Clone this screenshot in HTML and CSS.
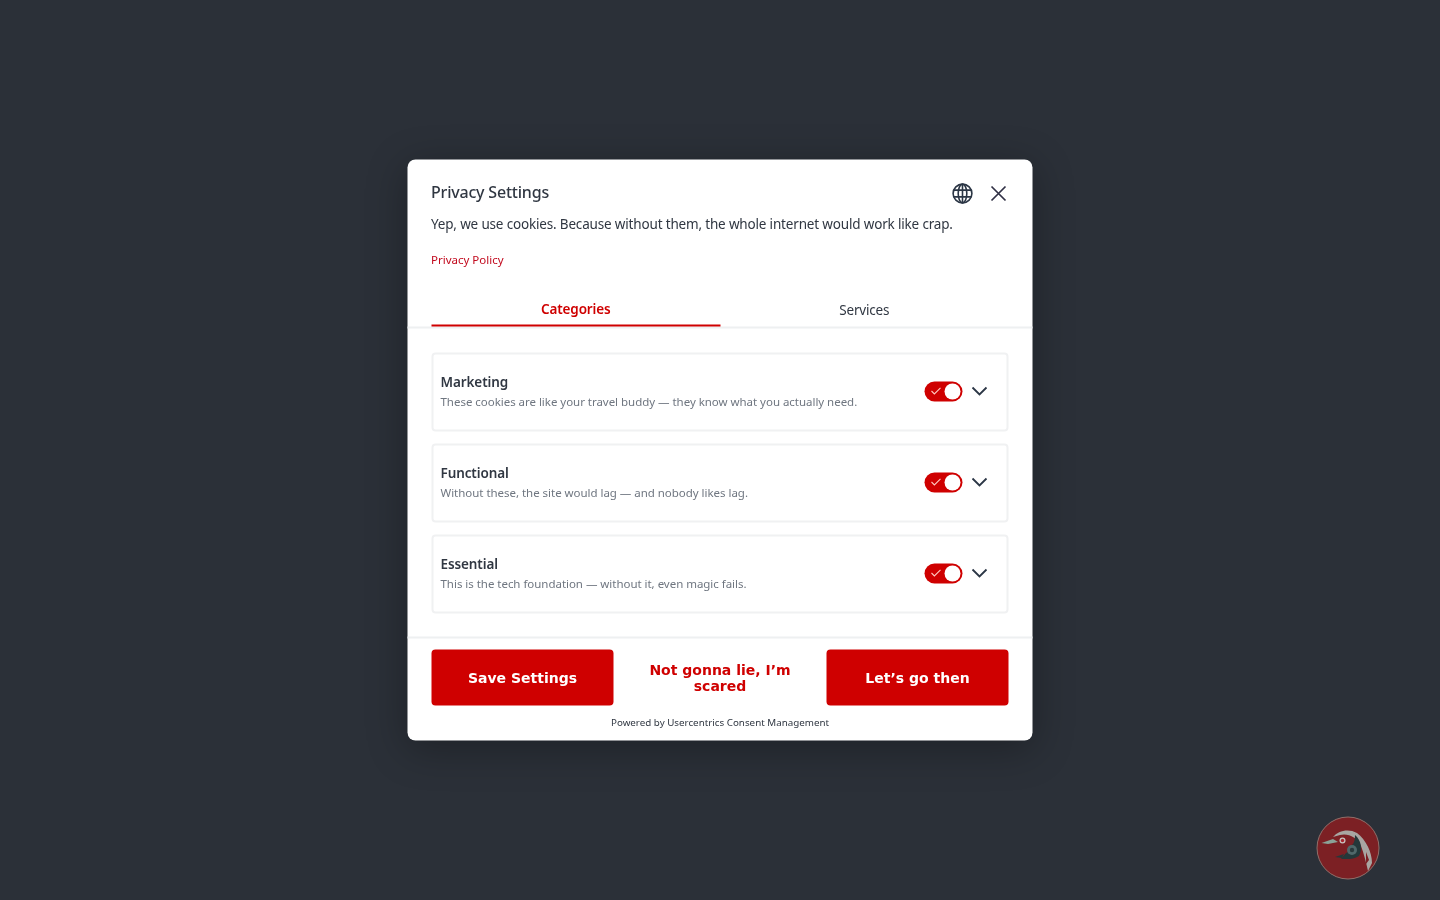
FILE: index.html
```html
<!DOCTYPE html>
<html lang="en">
<head>
<meta charset="utf-8">
<title>Privacy Settings</title>
<link rel="stylesheet" href="styles.css">
</head>
<body>
<main class="modal">
  <header class="head">
    <div class="title-row">
      <h1 class="title">Privacy Settings</h1>
      <div class="head-icons">
        <svg class="globe" viewBox="0 0 22 22" fill="none" stroke="#2b3645" stroke-width="1.6"><circle cx="11" cy="11" r="9.4"/><ellipse cx="11" cy="11" rx="4.3" ry="9.4"/><path d="M2.2 7.6h17.6M2.2 14.4h17.6M11 1.6v18.8"/></svg>
        <svg class="close" viewBox="0 0 16 16" fill="none" stroke="#303045" stroke-width="1.7"><path d="M1 1l14 14M15 1L1 15"/></svg>
      </div>
    </div>
    <p class="intro">Yep, we use cookies. Because without them, the whole internet would work like crap.</p>
    <a class="policy" href="#">Privacy Policy</a>
  </header>
  <nav class="tabs">
    <div class="tab tab-active">Categories</div>
    <div class="tab">Services</div>
  </nav>
  <section class="list">
    <article class="row">
      <div class="row-text"><h2 class="row-title">Marketing</h2><p class="row-desc">These cookies are like your travel buddy — they know what you actually need.</p></div>
      <div class="row-controls">
        <div class="toggle"><svg class="tick" viewBox="0 0 12 10" fill="none" stroke="#ffc9c0" stroke-width="1.2"><path d="M1 5l3.2 3.2L11 1.4"/></svg><span class="knob"></span></div>
        <svg class="chev" viewBox="0 0 16 10" fill="none" stroke="#2b3645" stroke-width="1.8"><path d="M1 1l7 7 7-7"/></svg>
      </div>
    </article>
    <article class="row">
      <div class="row-text"><h2 class="row-title">Functional</h2><p class="row-desc">Without these, the site would lag — and nobody likes lag.</p></div>
      <div class="row-controls">
        <div class="toggle"><svg class="tick" viewBox="0 0 12 10" fill="none" stroke="#ffc9c0" stroke-width="1.2"><path d="M1 5l3.2 3.2L11 1.4"/></svg><span class="knob"></span></div>
        <svg class="chev" viewBox="0 0 16 10" fill="none" stroke="#2b3645" stroke-width="1.8"><path d="M1 1l7 7 7-7"/></svg>
      </div>
    </article>
    <article class="row">
      <div class="row-text"><h2 class="row-title">Essential</h2><p class="row-desc">This is the tech foundation — without it, even magic fails.</p></div>
      <div class="row-controls">
        <div class="toggle"><svg class="tick" viewBox="0 0 12 10" fill="none" stroke="#ffc9c0" stroke-width="1.2"><path d="M1 5l3.2 3.2L11 1.4"/></svg><span class="knob"></span></div>
        <svg class="chev" viewBox="0 0 16 10" fill="none" stroke="#2b3645" stroke-width="1.8"><path d="M1 1l7 7 7-7"/></svg>
      </div>
    </article>
  </section>
  <footer class="foot">
    <div class="buttons">
      <button class="btn btn-solid">Save Settings</button>
      <button class="btn btn-plain">Not gonna lie, I’m scared</button>
      <button class="btn btn-solid">Let’s go then</button>
    </div>
    <p class="powered">Powered by Usercentrics Consent Management</p>
  </footer>
</main>
<div class="bubble">
  <svg viewBox="0 0 64 64" width="64" height="64">
    <circle cx="32" cy="32" r="31" fill="#7c2024" stroke="#8f6f6a" stroke-width="1"/>
    <path d="M17 21C22 15 32 12 41 17C50 24 56 36 56 47L52 55C50 46 48 38 45 30C41 21 32 17 24 19Z" fill="#a8a6a2"/>
    <path d="M39 19C45 24 47 33 43 40C37 44 31 43 25 43L30 37C33 36 35 33 34 30C38 29 39 24 39 19Z" fill="#24383a"/>
    <path d="M5.5 27L17 23L22 26L12 28Z" fill="#8aa398"/>
    <path d="M19 41L28 38L26 42Z" fill="#24383a"/>
    <circle cx="36" cy="34" r="5" fill="#50686a"/><circle cx="36" cy="34" r="2.2" fill="#2a3a3c"/>
    <circle cx="26.5" cy="24.5" r="3" fill="#c8c4c0"/><circle cx="26.5" cy="24.5" r="1.7" fill="#a8242e"/>
    <path d="M50 36L53 44L50 48Z" fill="#7c2024"/>
  </svg>
</div>
</body>
</html>
```
FILE: styles.css
```css
* { box-sizing: border-box; }
html, body { height: 100%; margin: 0; }
body {
  background: #2b3038;
  font-family: "Noto Sans", sans-serif;
  color: #303742;
}
.modal {
  position: fixed;
  left: 50%;
  top: 50%;
  transform: translate(-50%, -50%);
  width: 625px;
  height: 581px;
  background: #fff;
  border-radius: 8px;
  display: flex;
  flex-direction: column;
  box-shadow: 0 8px 40px rgba(0,0,0,.3);
}
.head { padding: 18px 24px 0 23.5px; }
.title-row { display: flex; justify-content: space-between; align-items: center; height: 28px; }
.title { margin: 0; font-size: 16px; font-weight: 500; letter-spacing: -.2px; color: #303742; }
.head-icons { display: flex; align-items: center; gap: 17px; margin: 4px 2px 0 0; }
.globe { width: 22px; height: 22px; }
.close { width: 16px; height: 16px; }
.intro { margin: 8px 0 0; font-size: 13.5px; letter-spacing: -.17px; line-height: 20px; color: #303742; }
.policy { display: block; margin-top: 17px; font-size: 11.5px; line-height: 18px; color: #c20a1e; text-decoration: none; }
.tabs { display: flex; align-items: flex-start; margin-top: 25px; padding: 0 24px; height: 35px; border-bottom: 2px solid #eef0f1; }
.tab { flex: 1; text-align: center; font-size: 13.5px; letter-spacing: -.2px; line-height: 30px; height: 33px; padding-top: 1px; }
.tab-active { color: #cf0000; font-weight: 600; letter-spacing: -.15px; border-bottom: 2px solid #cf0000; padding-top: 0; }
.list { flex: 1; padding: 24px 24px 0; display: flex; flex-direction: column; gap: 12px; }
.row {
  height: 79px;
  border: 2px solid #f0f1f2;
  border-radius: 4px;
  padding: 0 19px 2px 7px;
  display: flex;
  align-items: center;
  justify-content: space-between;
}
.row-title { margin: 0; font-size: 13.5px; letter-spacing: -.1px; line-height: 20px; font-weight: 600; color: #303742; }
.row-desc { margin: 1px 0 0; font-size: 11.5px; letter-spacing: -.03px; line-height: 18px; color: #6f7680; }
.row-controls { display: flex; align-items: center; gap: 9px; }
.toggle {
  width: 38px;
  height: 20px;
  border-radius: 10px;
  background: #cf0000;
  display: flex;
  align-items: center;
  justify-content: space-between;
  padding: 0 2px 0 6px;
}
.tick { width: 11px; height: 9px; }
.knob { width: 16px; height: 16px; border-radius: 50%; background: #fff; }
.chev { width: 16px; height: 10px; }
.foot { border-top: 2px solid #eef0f1; padding: 11px 24px 0; height: 104px; }
.buttons { display: grid; grid-template-columns: 1fr 1fr 1fr; gap: 15.5px; }
.btn {
  height: 56px;
  border: 0;
  border-radius: 4px;
  font-family: "DejaVu Sans", sans-serif;
  font-size: 14px;
  line-height: 16px;
  font-weight: 700;
  padding: 0 16px;
}
.btn-solid { background: #cf0000; color: #fff; }
.btn-plain { background: #fff; color: #cf0000; }
.powered { margin: 9px 0 0; text-align: center; font-size: 9.8px; line-height: 15px; color: #303742; }
.bubble { position: fixed; left: 1316px; top: 816px; width: 64px; height: 64px; }
```
